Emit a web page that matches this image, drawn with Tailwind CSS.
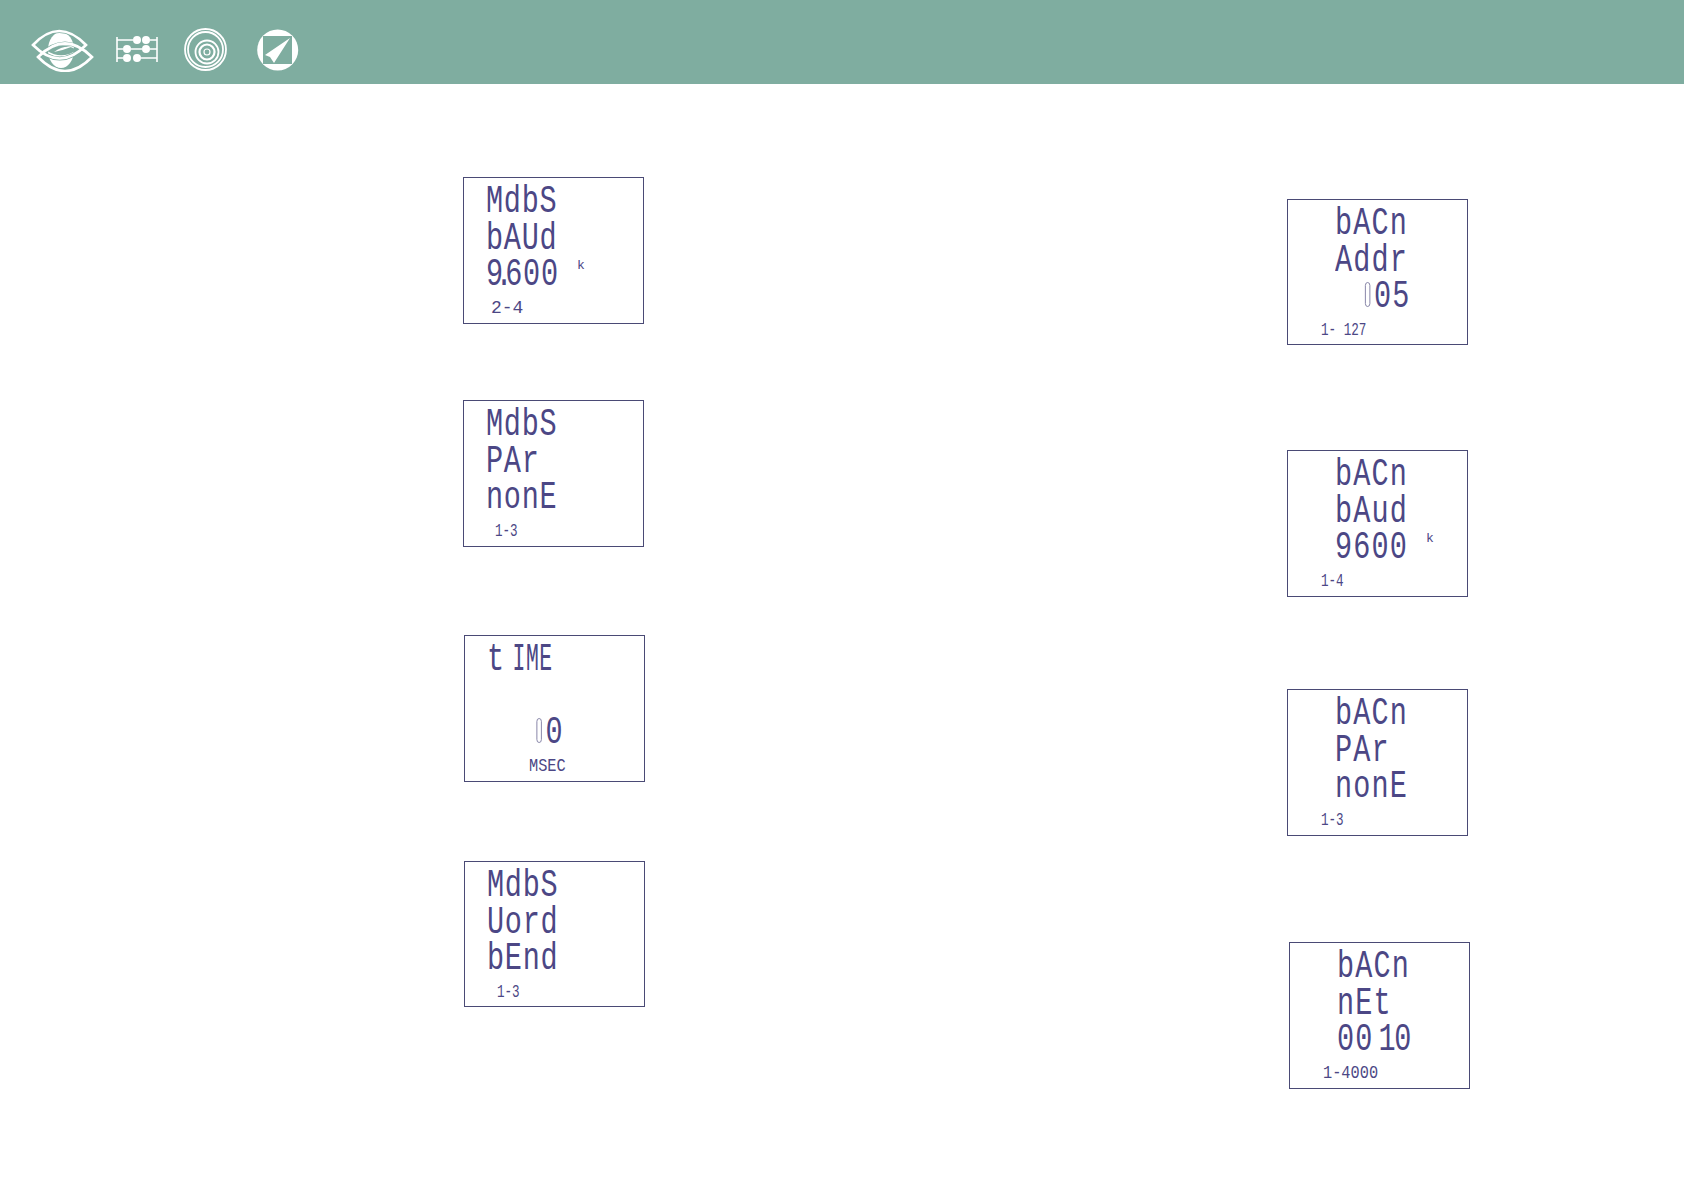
<!DOCTYPE html>
<html lang="en">
<head>
    <meta charset="UTF-8">
    <title>Communication settings</title>
    <script src="https://cdn.jsdelivr.net/npm/@tailwindcss/browser@4"></script>
</head>
<body class="bg-white font-['Liberation_Mono',monospace] text-[#4c4785]">
    <!-- Header with the four icons -->
    <header class="h-[84px] bg-[#7fada0] flex pl-[30px] pt-[28px]">
        <svg width="66" height="44" viewBox="30 28 66 44" fill="none">
            <ellipse cx="61" cy="50" rx="13" ry="18" fill="#fff"/>
            <path d="M33 45 Q59 17 86 45 Q60 72 33 45Z" stroke="#7fada0" stroke-width="4"/>
            <path d="M38 57 Q65 30 92 57 Q65 85 38 57Z" stroke="#7fada0" stroke-width="4"/>
            <path d="M47 51 Q62 41 77 50 Q62 60 47 51Z" fill="#7fada0"/>
            <path d="M54 52 Q62 46 71 47 Q64 50 54 52Z" fill="#fff"/>
            <path d="M33 45 Q59 17 86 45 Q60 72 33 45Z" stroke="#fff" stroke-width="2.6"/>
            <path d="M38 57 Q65 30 92 57 Q65 85 38 57Z" stroke="#fff" stroke-width="2.6"/>
        </svg>
        <svg class="ml-[20px]" width="42" height="44" viewBox="116 28 42 44" fill="#fff">
            <path d="M117 37V62M157 37V62M117 40H133M150 40H157M117 49H123M131 49H142M150 49H157M117 58H123M141 58H157" stroke="#fff" stroke-width="1.6"/>
            <circle cx="137" cy="40" r="4"/><circle cx="146" cy="40" r="4"/>
            <circle cx="127" cy="49" r="4"/><circle cx="146" cy="49" r="4"/>
            <circle cx="127" cy="58" r="4"/><circle cx="137" cy="58" r="4"/>
        </svg>
        <svg class="ml-[26px]" width="44" height="44" viewBox="184 28 44 44" fill="none" stroke="#fff">
            <circle cx="205.5" cy="49.5" r="20.5" stroke-width="1.8"/>
            <circle cx="205.5" cy="49.5" r="17.5" stroke-width="1.8"/>
            <circle cx="207" cy="52" r="11.5" stroke-width="1.8"/>
            <circle cx="207" cy="52" r="7.5" stroke-width="2.2"/>
            <circle cx="207" cy="52" r="3" stroke-width="1.2"/>
        </svg>
        <svg class="ml-[29px]" width="42" height="44" viewBox="257 28 42 44">
            <circle cx="277.7" cy="50" r="20.5" fill="#fff"/>
            <rect x="263" y="36" width="29" height="28" fill="#7fada0"/>
            <path d="M290 38L265 55L270 57L274 63Z" fill="#fff"/>
        </svg>
    </header>

    <main class="flex">
        <!-- Modbus column -->
        <section class="ml-[463px] w-[824px] shrink-0 flex flex-col">
            <div class="relative mt-[93px] w-[181px] h-[147px] border border-[#4a4a75] flex flex-col pt-[6px] pl-[22px]">
                <div class="origin-left scale-x-[.75] text-[38px] leading-[36.5px] tracking-[1px]">
                    <p>MdbS</p>
                    <p>bAUd</p>
                    <p><span class="tracking-[-10px]">9.</span>600</p>
                </div>
                <p class="mt-[4px] ml-[5px] text-[18px] leading-[20px]">2-4</p>
                <span class="absolute left-[113px] top-[81px] text-[13px] leading-[14px]">k</span>
            </div>
            <div class="relative mt-[76px] w-[181px] h-[147px] border border-[#4a4a75] flex flex-col pt-[6px] pl-[22px]">
                <div class="origin-left scale-x-[.75] text-[38px] leading-[36.5px] tracking-[1px]">
                    <p>MdbS</p>
                    <p>PAr</p>
                    <p>nonE</p>
                </div>
                <p class="origin-left scale-x-[.7] mt-[4px] ml-[9px] text-[18px] leading-[20px]">1-3</p>
            </div>
            <div class="relative mt-[88px] ml-[1px] w-[181px] h-[147px] border border-[#4a4a75] flex flex-col pt-[6px] pl-[22px]">
                <div class="origin-left scale-x-[.75] text-[38px] leading-[36.5px] tracking-[1px]">
                    <p>t<span class="tracking-[-13px]"> </span><span class="inline-block origin-left scale-x-[.75]">IME</span></p>
                    <p>&nbsp;</p>
                    <p class="ml-[66px]"><span class="inline-block align-top mt-[3px] w-[7px] h-[25px] mr-[5px] border border-[#77759c] rounded-full text-transparent text-[8px] leading-[23px]">1</span>0</p>
                </div>
                <p class="origin-left scale-x-[.85] mt-[4px] ml-[42px] text-[18px] leading-[20px]">MSEC</p>
            </div>
            <div class="relative mt-[79px] ml-[1px] w-[181px] h-[146px] border border-[#4a4a75] flex flex-col pt-[6px] pl-[22px]">
                <div class="origin-left scale-x-[.75] text-[38px] leading-[36.5px] tracking-[1px]">
                    <p>MdbS</p>
                    <p>Uord</p>
                    <p>bEnd</p>
                </div>
                <p class="origin-left scale-x-[.7] mt-[4px] ml-[10px] text-[18px] leading-[20px]">1-3</p>
            </div>
        </section>

        <!-- BACnet column -->
        <section class="flex flex-col">
            <div class="relative mt-[115px] w-[181px] h-[146px] border border-[#4a4a75] flex flex-col pt-[6px] pl-[47px]">
                <div class="origin-left scale-x-[.75] text-[38px] leading-[36.5px] tracking-[1.5px]">
                    <p>bACn</p>
                    <p>Addr</p>
                    <p class="ml-[40px]"><span class="inline-block align-top mt-[3px] w-[7px] h-[25px] mr-[5px] border border-[#77759c] rounded-full text-transparent text-[8px] leading-[23px]">1</span>05</p>
                </div>
                <p class="origin-left scale-x-[.7] mt-[4px] -ml-[14px] text-[18px] leading-[20px]">1- 127</p>
            </div>
            <div class="relative mt-[105px] w-[181px] h-[147px] border border-[#4a4a75] flex flex-col pt-[6px] pl-[47px]">
                <div class="origin-left scale-x-[.75] text-[38px] leading-[36.5px] tracking-[1.5px]">
                    <p>bACn</p>
                    <p>bAud</p>
                    <p>9600</p>
                </div>
                <p class="origin-left scale-x-[.7] mt-[4px] -ml-[14px] text-[18px] leading-[20px]">1-4</p>
                <span class="absolute left-[138px] top-[81px] text-[13px] leading-[14px]">k</span>
            </div>
            <div class="relative mt-[92px] w-[181px] h-[147px] border border-[#4a4a75] flex flex-col pt-[6px] pl-[47px]">
                <div class="origin-left scale-x-[.75] text-[38px] leading-[36.5px] tracking-[1.5px]">
                    <p>bACn</p>
                    <p>PAr</p>
                    <p>nonE</p>
                </div>
                <p class="origin-left scale-x-[.7] mt-[4px] -ml-[14px] text-[18px] leading-[20px]">1-3</p>
            </div>
            <div class="relative mt-[106px] ml-[2px] w-[181px] h-[147px] border border-[#4a4a75] flex flex-col pt-[6px] pl-[47px]">
                <div class="origin-left scale-x-[.75] text-[38px] leading-[36.5px] tracking-[1.5px]">
                    <p>bACn</p>
                    <p>nEt</p>
                    <p>00<span class="tracking-[-16px]"> </span><span class="tracking-[-2px]">10</span></p>
                </div>
                <p class="origin-left scale-x-[.85] mt-[4px] -ml-[14px] text-[18px] leading-[20px]">1-4000</p>
            </div>
        </section>
    </main>
</body>
</html>
